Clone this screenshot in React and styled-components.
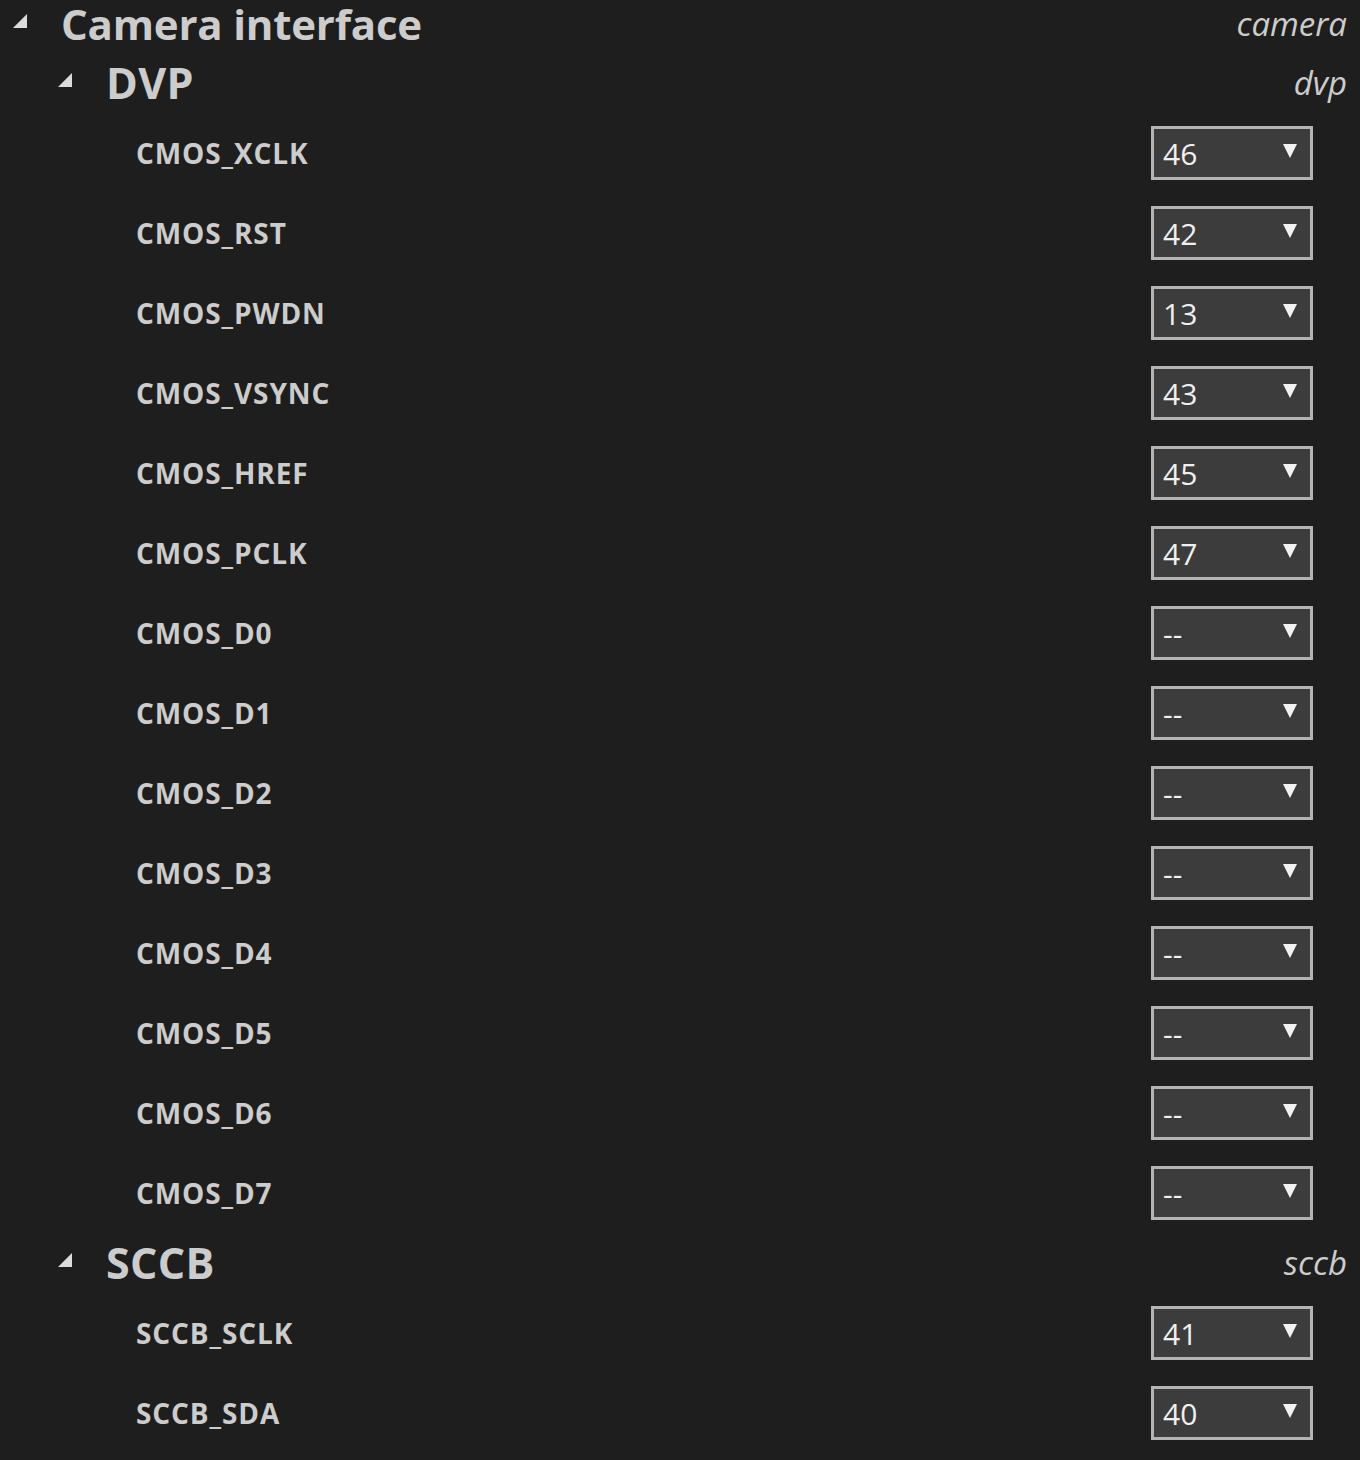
import React from "react";
import styled, { createGlobalStyle } from "styled-components";

const GlobalStyle = createGlobalStyle`
  html, body {
    margin: 0;
    padding: 0;
    background: #1e1e1e;
  }
  body {
    font-family: "Open Sans", "Noto Sans", sans-serif;
    color: #cccccc;
  }
`;

const dvpPins = [
  { name: "CMOS_XCLK", value: "46" },
  { name: "CMOS_RST", value: "42" },
  { name: "CMOS_PWDN", value: "13" },
  { name: "CMOS_VSYNC", value: "43" },
  { name: "CMOS_HREF", value: "45" },
  { name: "CMOS_PCLK", value: "47" },
  { name: "CMOS_D0", value: "--" },
  { name: "CMOS_D1", value: "--" },
  { name: "CMOS_D2", value: "--" },
  { name: "CMOS_D3", value: "--" },
  { name: "CMOS_D4", value: "--" },
  { name: "CMOS_D5", value: "--" },
  { name: "CMOS_D6", value: "--" },
  { name: "CMOS_D7", value: "--" },
];

const sccbPins = [
  { name: "SCCB_SCLK", value: "41" },
  { name: "SCCB_SDA", value: "40" },
];

const Toggle = () => (
  <ToggleIcon viewBox="0 0 14 14">
    <path d="M14 0 L14 14 L0 14 Z" fill="#dcdcdc" />
  </ToggleIcon>
);

const ArrowDown = () => (
  <ArrowIcon viewBox="0 0 14 14">
    <path d="M0 0 L14 0 L7 14 Z" fill="#f2f2f2" />
  </ArrowIcon>
);

const PinRow = ({ name, value }) => (
  <Row>
    <PinLabel>{name}</PinLabel>
    <Select>
      <SelectValue>{value}</SelectValue>
      <ArrowDown />
    </Select>
  </Row>
);

const Group = ({ title, id, level, children }) => (
  <>
    <Heading level={level}>
      <Toggle />
      <HeadingTitle level={level}>{title}</HeadingTitle>
      <HeadingId>{id}</HeadingId>
    </Heading>
    {children}
  </>
);

export default function App() {
  return (
    <Page>
      <GlobalStyle />
      <Group title="Camera interface" id="camera" level={0}>
        <Group title="DVP" id="dvp" level={1}>
          {dvpPins.map((p) => (
            <PinRow key={p.name} {...p} />
          ))}
        </Group>
        <Group title="SCCB" id="sccb" level={1}>
          {sccbPins.map((p) => (
            <PinRow key={p.name} {...p} />
          ))}
        </Group>
      </Group>
    </Page>
  );
}

const Page = styled.div`
  width: 1360px;
  height: 1460px;
  box-sizing: border-box;
  padding: 0 13px 0 0;
  display: flex;
  flex-direction: column;
  overflow: hidden;
`;

const Heading = styled.div`
  display: flex;
  align-items: center;
  box-sizing: border-box;
  height: ${(p) => (p.level === 0 ? "53px" : "60px")};
  padding-bottom: ${(p) => (p.level === 0 ? "5px" : "0")};
  padding-left: ${(p) => (p.level === 0 ? "13px" : "58px")};
`;

const ToggleIcon = styled.svg`
  width: 14px;
  height: 14px;
  flex: none;
  margin-top: -6px;
`;

const HeadingTitle = styled.div`
  font-weight: 700;
  font-size: ${(p) => (p.level === 0 ? "42px" : "43px")};
  letter-spacing: ${(p) => (p.level === 0 ? "-0.2px" : "0.3px")};
  line-height: ${(p) => (p.level === 0 ? "44px" : "52px")};
  color: #cccccc;
  margin-left: 34px;
`;

const HeadingId = styled.div`
  margin-left: auto;
  font-style: italic;
  font-weight: 400;
  font-size: 33px;
  line-height: 44px;
  color: #cccccc;
`;

const Row = styled.div`
  display: flex;
  align-items: center;
  height: 80px;
  padding-left: 136px;
  padding-right: 34px;
`;

const PinLabel = styled.div`
  font-weight: 700;
  font-size: 28px;
  letter-spacing: 0.9px;
  color: #cccccc;
`;

const Select = styled.div`
  margin-left: auto;
  width: 162px;
  height: 54px;
  box-sizing: border-box;
  border: 3px solid #b4b4b4;
  background: #3c3c3c;
  display: flex;
  align-items: center;
  padding: 0 13px 0 9px;
`;

const SelectValue = styled.span`
  font-size: 30px;
  color: #f0f0f0;
  flex: 1;
`;

const ArrowIcon = styled.svg`
  width: 14px;
  height: 14px;
  margin-top: -4px;
`;
